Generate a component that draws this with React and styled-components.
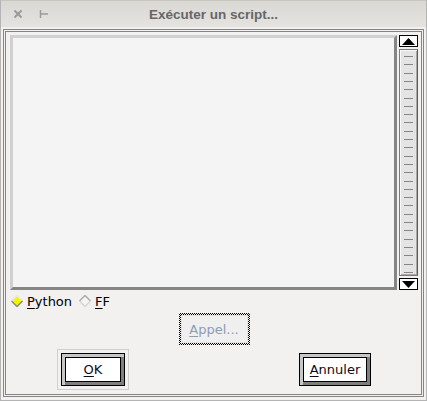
import React from 'react';
import styled, { createGlobalStyle } from 'styled-components';

const Global = createGlobalStyle`
  html, body { margin: 0; padding: 0; background: #f2f1f0; }
  * { box-sizing: border-box; }
`;

const Window = styled.div`
  width: 427px;
  height: 401px;
  display: flex;
  flex-direction: column;
  background: #f2f1f0;
  border: 1px solid #b4b4b4;
  border-top: none;
  font-family: "DejaVu Sans", sans-serif;
  font-size: 13px;
  color: #000;
`;

const TitleBar = styled.div`
  height: 27px;
  flex: none;
  display: flex;
  align-items: center;
  position: relative;
  background: linear-gradient(#dad8d4, #e4e3e0);
  border-top: 1px solid #c9c6c0;
`;

const TitleButtons = styled.div`
  display: flex;
  align-items: center;
  gap: 16px;
  padding-left: 12px;
`;

const Title = styled.div`
  position: absolute;
  left: 0;
  right: 0;
  text-align: center;
  font-family: "Liberation Sans", sans-serif;
  font-weight: bold;
  font-size: 13.5px;
  color: #666;
  pointer-events: none;
`;

const Frame = styled.div`
  flex: 1;
  margin: 2px 2px 3px 2px;
  border: 3px double #858585;
  display: flex;
  flex-direction: column;
  padding: 3px 3px 0 4px;
`;

const EditorRow = styled.div`
  display: flex;
  gap: 2px;
  height: 255px;
`;

const TextArea = styled.div`
  flex: 1;
  background: #f4f4f4;
  border-style: solid;
  border-width: 3px;
  border-color: #d0d0d0 #858585 #858585 #d0d0d0;
`;

const ScrollBar = styled.div`
  width: 19px;
  display: flex;
  flex-direction: column;
  gap: 2px;
`;

const ArrowButton = styled.div`
  height: 12px;
  flex: none;
  border: 1px solid #000;
  background: #fff;
  display: flex;
  align-items: center;
  justify-content: center;
`;

const Thumb = styled.div`
  flex: 1;
  border: 1px solid #7c7c7c;
  border-right-color: #5a5a5a;
  background: repeating-linear-gradient(
      to bottom,
      transparent 0 6px,
      #858585 6px 7px,
      transparent 7px 8.3px
    )
    center / 9px 100% no-repeat,
    #e4e4e4;
  box-shadow: inset 1px 1px 0 #f8f8f8, inset -1px -1px 0 #a8a8a8;
`;

const RadioRow = styled.div`
  display: flex;
  align-items: center;
  height: 20px;
  margin-top: 1px;
  padding-left: 1px;
`;

const Radio = styled.label`
  display: flex;
  align-items: center;
  gap: 4px;
  margin-right: 7px;
`;

const Key = styled.span`
  text-decoration: underline;
  text-underline-offset: 2px;
`;

const CenterRow = styled.div`
  display: flex;
  justify-content: center;
  margin-top: 2px;
`;

const FocusRing = styled.div`
  padding: 2px;
  background: repeating-conic-gradient(#000 0 25%, #f2f1f0 0 50%) 0 0 / 2px 2px;
`;

const FlatButton = styled.button`
  width: 67px;
  height: 28px;
  border: 1px solid #e2e2e2;
  background: #efefef;
  font-family: inherit;
  font-size: 13px;
  color: #8c9db1;
  padding: 0;
`;

const ButtonRow = styled.div`
  display: flex;
  align-items: center;
  margin-top: 4px;
  padding: 0 47px 0 47px;
  height: 40px;
`;

const DefaultRing = styled.div`
  border: 1px solid #cfcfcf;
  padding: 3px;
`;

const Button = styled.button`
  width: ${(p) => p.$w}px;
  height: 33px;
  border: 1px solid #000;
  background: #fff;
  padding: 0;
  font-family: inherit;
  font-size: 13px;
  color: #0a0a1a;
  margin-left: ${(p) => (p.$right ? 'auto' : '0')};
  box-shadow: inset 3px 3px 0 #c7c7c7, inset -3px -3px 0 #7f7f7f,
    inset 0 0 0 4px #000;
`;

const Diamond = ({ on }) => (
  <svg width="12" height="12" viewBox="0 0 12 12">
    <path d="M6 0.5 L11.5 6 L6 11.5 L0.5 6 Z" fill={on ? '#f5f500' : '#f4f4f4'} />
    <path d="M0.5 6 L6 0.5 L11.5 6" fill="none" stroke={on ? '#e8e8e8' : '#ababab'} strokeWidth="1.5" />
    <path d="M0.5 6 L6 11.5 L11.5 6" fill="none" stroke={on ? '#8a8a8a' : '#d6d6d6'} strokeWidth="1.5" />
  </svg>
);

export default function App() {
  return (
    <>
      <Global />
      <Window>
        <TitleBar>
          <TitleButtons>
            <svg width="10" height="10" viewBox="0 0 10 10">
              <path d="M1.5 1.5 L8.5 8.5 M8.5 1.5 L1.5 8.5" stroke="#9a9a9a" strokeWidth="2" />
            </svg>
            <svg width="10" height="10" viewBox="0 0 10 10">
              <path d="M1.5 1 V9 M1.5 5 H9" stroke="#9a9a9a" strokeWidth="1.5" />
            </svg>
          </TitleButtons>
          <Title>Exécuter un script...</Title>
        </TitleBar>
        <Frame>
          <EditorRow>
            <TextArea />
            <ScrollBar>
              <ArrowButton>
                <svg width="13" height="7" viewBox="0 0 13 7">
                  <path d="M6.5 0 L13 7 H0 Z" fill="#000" />
                </svg>
              </ArrowButton>
              <Thumb />
              <ArrowButton>
                <svg width="13" height="7" viewBox="0 0 13 7">
                  <path d="M0 0 H13 L6.5 7 Z" fill="#000" />
                </svg>
              </ArrowButton>
            </ScrollBar>
          </EditorRow>
          <RadioRow>
            <Radio>
              <Diamond on />
              <span><Key>P</Key>ython</span>
            </Radio>
            <Radio>
              <Diamond />
              <span><Key>F</Key>F</span>
            </Radio>
          </RadioRow>
          <CenterRow>
            <FocusRing>
              <FlatButton disabled><Key>A</Key>ppel...</FlatButton>
            </FocusRing>
          </CenterRow>
          <ButtonRow>
            <DefaultRing>
              <Button $w={64}><Key>O</Key>K</Button>
            </DefaultRing>
            <Button $w={72} $right><Key>A</Key>nnuler</Button>
          </ButtonRow>
        </Frame>
      </Window>
    </>
  );
}
